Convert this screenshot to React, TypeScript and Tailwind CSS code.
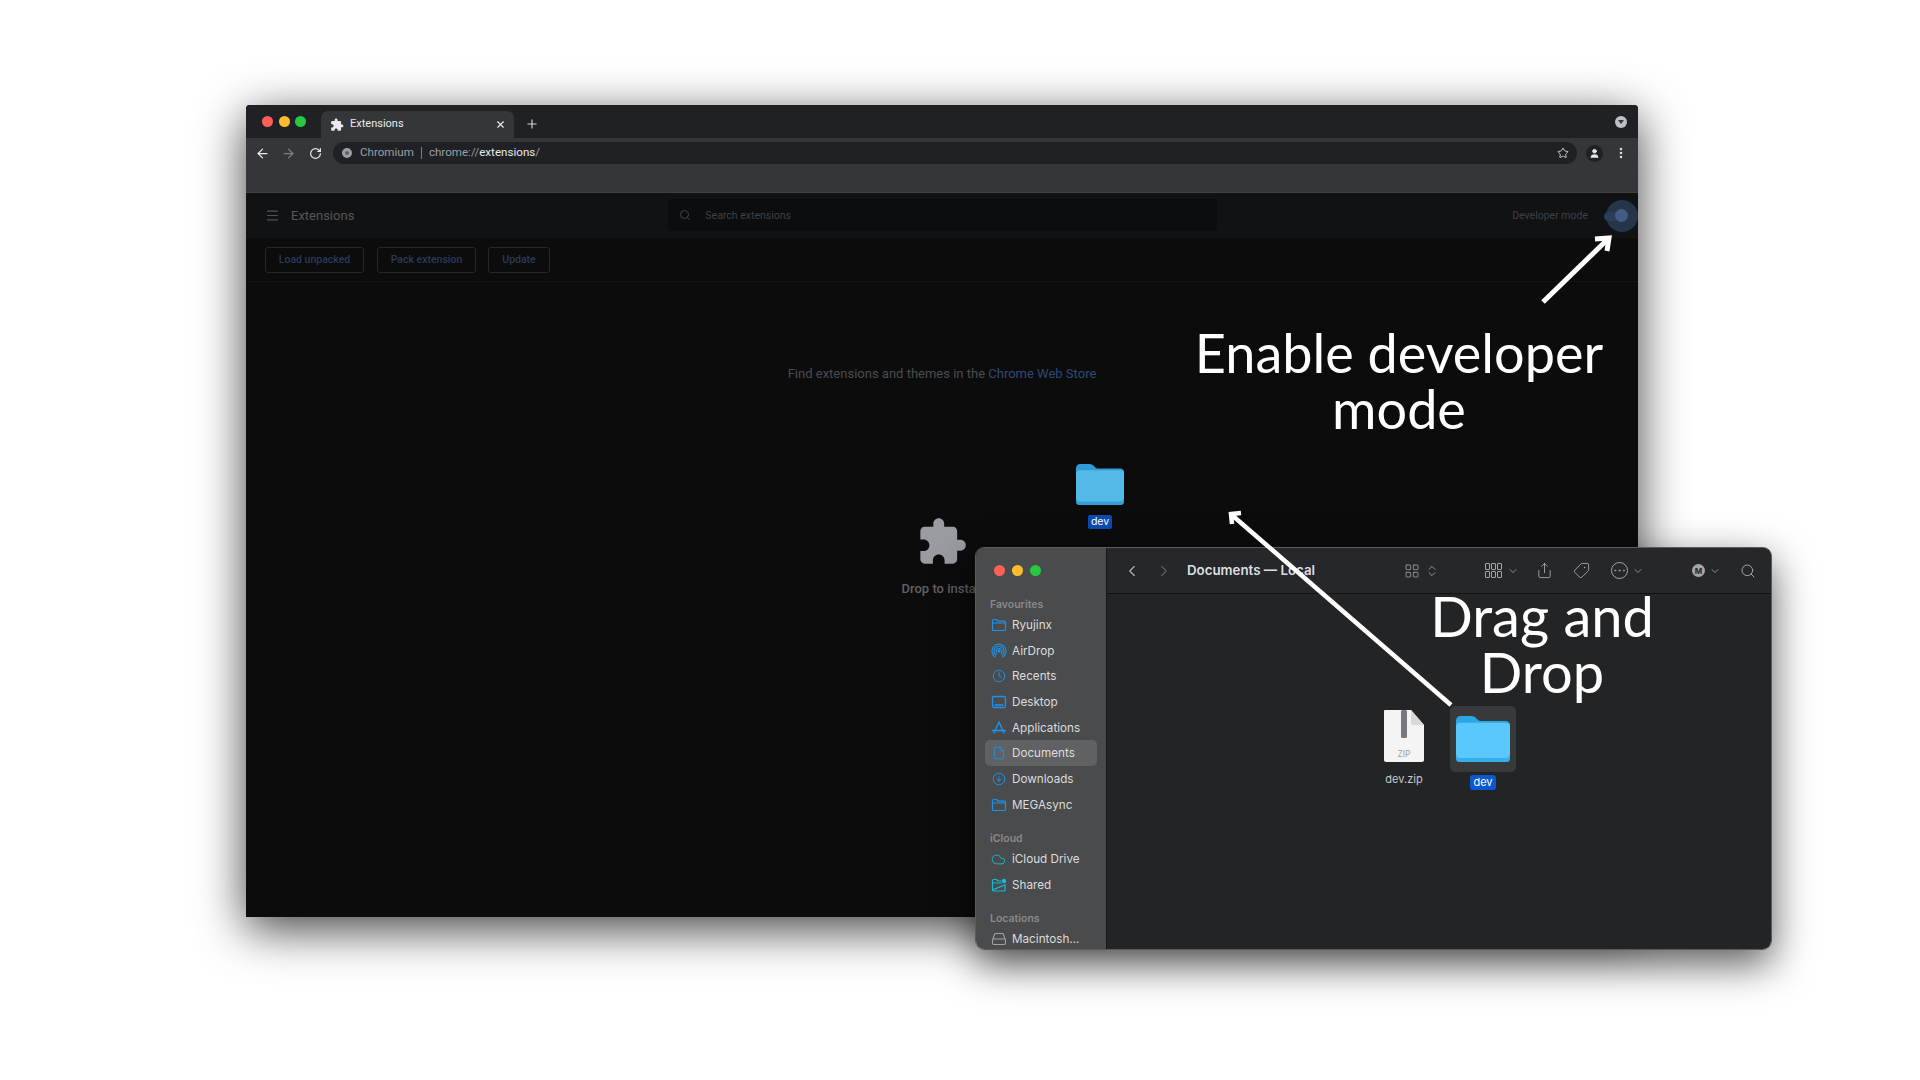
import { ArrowLeft, ArrowRight, ChevronDown, ChevronLeft, ChevronRight, ChevronsUpDown, CircleArrowDown, Clock, Cloud, Ellipsis, File, LayoutGrid, Menu, MoreVertical, Plus, RotateCw, Search, Share, Star, Tag, User, X } from "lucide-react";
import type { ReactNode } from "react";

const PUZZLE =
  "M20.5 11H19V7c0-1.1-.9-2-2-2h-4V3.5C13 2.12 11.88 1 10.5 1S8 2.12 8 3.5V5H4c-1.1 0-1.99.9-1.99 2v3.8H3.5c1.49 0 2.7 1.21 2.7 2.7s-1.21 2.7-2.7 2.7H2V20c0 1.1.9 2 2 2h3.8v-1.5c0-1.49 1.21-2.7 2.7-2.7 1.49 0 2.7 1.21 2.7 2.7V22H17c1.1 0 2-.9 2-2v-4h1.5c1.38 0 2.5-1.12 2.5-2.5S21.88 11 20.5 11z";

const Puzzle = ({ size, color }: { size: number; color: string }) => (
  <svg width={size} height={size} viewBox="0 0 24 24" fill={color}>
    <path d={PUZZLE} />
  </svg>
);

const Lights = ({ gap }: { gap: string }) => (
  <div className={`flex items-center ${gap}`}>
    <span className="w-[11px] h-[11px] rounded-full bg-[#fe5f57]" />
    <span className="w-[11px] h-[11px] rounded-full bg-[#febc2e]" />
    <span className="w-[11px] h-[11px] rounded-full bg-[#28c840]" />
  </div>
);

const FolderIcon = ({ w, h, back, front, lip }: { w: number; h: number; back: string; front: string; lip: string }) => (
  <svg width={w} height={h} viewBox="0 0 54 46">
    <path d="M0 5 C0 2 2 0 5 0 H15 C18 0 19 1 21 3 C22 4 23 5 25 5 H50 C52 5 54 7 54 9 V20 H0 Z" fill={back} />
    <rect x="0" y="6" width="54" height="40" rx="3.5" fill={lip} />
    <path d="M0 10 C0 8 2 7 4 7 H50 C52 7 54 8 54 10 V38 C54 40 52 42 50 42 H4 C2 42 0 40 0 38 Z" fill={front} />
  </svg>
);

/* sidebar glyphs, 16px box */
const SideFolder = ({ color }: { color: string }) => (
  <svg width="16" height="14" viewBox="0 0 16 14" fill="none" stroke={color} strokeWidth="1.2">
    <path d="M1.5 11.5V2.500c0-.6.4-1 1-1h3.200l1.300 1.600h6.500c.6 0 1 .4 1 1v7.400c0 .6-.4 1-1 1h-11c-.6 0-1-.4-1-1z" />
    <path d="M1.500 5h13" />
  </svg>
);

const AirDrop = () => (
  <svg width="16" height="16" viewBox="0 0 16 16" fill="none" stroke="#1c93ee" strokeWidth="1.1">
    <path d="M4.500 14.200A7 7 0 1 1 11.500 14.200" />
    <path d="M5.300 12.400A5 5 0 1 1 10.700 12.400" />
    <path d="M6 10.700A3 3 0 1 1 10 10.700" />
    <circle cx="8" cy="8" r="1" fill="#1c93ee" />
  </svg>
);

const Desktop = () => (
  <svg width="16" height="14" viewBox="0 0 16 14" fill="none" stroke="#1c93ee" strokeWidth="1.3">
    <rect x="1.500" y="1.500" width="13" height="11" rx="1.500" />
    <path d="M3.500 10h9" strokeWidth="1.700" />
  </svg>
);

const Apps = () => (
  <svg width="16" height="14" viewBox="0 0 16 14" fill="none" stroke="#1c93ee" strokeWidth="1.400" strokeLinecap="round">
    <path d="M8 1l-5 11M8 1l5 11M1.500 9.500h13" />
  </svg>
);

const Shared = () => (
  <svg width="16" height="14" viewBox="0 0 16 14" fill="none" stroke="#12bcd6" strokeWidth="1.200">
    <path d="M1.500 12V2.500c0-.6.4-1 1-1h3l1.300 1.500h3.700M14 7v5c0 .6-.4 1-1 1H2.500c-.6 0-1-.4-1-1z" />
    <path d="M1.500 5h9" />
    <circle cx="13" cy="3" r="2.200" fill="#12bcd6" stroke="none" />
  </svg>
);

const Drive = () => (
  <svg width="16" height="14" viewBox="0 0 16 14" fill="none" stroke="#a2a3a5" strokeWidth="1.100">
    <path d="M2 7l1.500-4.500c.2-.6.600-1 1.200-1h6.600c.6 0 1 .4 1.200 1L14 7" />
    <rect x="1.500" y="7" width="13" height="5.500" rx="1.500" />
  </svg>
);

const SideRow = ({ icon, label, active }: { icon: ReactNode; label: string; active?: boolean }) => (
  <div className={`h-[25.7px] mx-[9px] flex items-center rounded-[5px] ${active ? "bg-[#606163]" : ""}`}>
    <span className="w-[27px] flex justify-center">{icon}</span>
    <span className="text-[11.7px] leading-[14px] text-[#dcdcdd]">{label}</span>
  </div>
);

const SideTitle = ({ label, className }: { label: string; className: string }) => (
  <div className={`pl-[14px] h-[14px] text-[10.5px] leading-[14px] font-semibold text-[#88898b] ${className}`}>{label}</div>
);

const Chromium = () => (
  <div className="absolute left-[246px] top-[105px] w-[1392px] h-[812px] flex flex-col bg-[#0c0c0d] shadow-[0_12px_48px_rgba(0,0,0,0.75)] font-['Roboto',sans-serif] overflow-hidden rounded-t-[4px]">
    {/* tab strip */}
    <div className="h-[33px] shrink-0 bg-[#202124] flex items-end relative">
      <div className="absolute left-[16px] top-[11px]">
        <Lights gap="gap-[5.5px]" />
      </div>
      <div className="ml-[75px] w-[193px] h-[27px] bg-[#35363a] rounded-t-[7px] flex items-center pl-[9px] pr-[8px]">
        <Puzzle size={14} color="#e8eaed" />
        <span className="ml-[6px] text-[11px] text-[#e8eaed]">Extensions</span>
        <X size={11} strokeWidth={2.5} className="ml-auto text-[#e8eaed]" />
      </div>
      <Plus size={14} strokeWidth={2} className="ml-[11px] mb-[7px] text-[#d4d5d7]" />
      <div className="ml-auto mr-[11px] mb-[10px] w-[12px] h-[12px] rounded-full bg-[#bdc1c6] flex items-center justify-center">
        <span className="border-x-[3px] border-x-transparent border-t-[4px] border-t-[#35363a]" />
      </div>
    </div>
    {/* toolbar */}
    <div className="h-[55px] shrink-0 bg-[#35363a] border-b border-[#3e3f43]">
      <div className="flex items-center h-[28px] mt-[1px] pl-[9px] pr-[10px]">
        <ArrowLeft size={15} strokeWidth={2} className="text-[#e8eaed]" />
        <ArrowRight size={15} strokeWidth={2} className="ml-[11px] text-[#7d7e82]" />
        <RotateCw size={13} strokeWidth={2.2} className="ml-[13px] text-[#e8eaed]" />
        <div className="ml-[11px] flex-1 h-[22px] bg-[#202124] rounded-full flex items-center pl-[9px] pr-[8px] text-[11.6px]">
          <span className="w-[10px] h-[10px] rounded-full border-[3px] border-[#9aa0a6] bg-[#5f6368]" />
          <span className="ml-[8px] text-[#9aa0a6]">Chromium</span>
          <span className="ml-[7px] w-px h-[12px] bg-[#7d7e82]" />
          <span className="ml-[7px] text-[#9aa0a6]">chrome://</span>
          <span className="text-[#e8eaed]">extensions</span>
          <span className="text-[#9aa0a6]">/</span>
          <Star size={12} strokeWidth={1.8} className="ml-auto text-[#dadce0]" />
        </div>
        <div className="ml-[9px] w-[17px] h-[17px] rounded-full bg-[#202124] flex items-center justify-center">
          <User size={11} fill="#e8eaed" strokeWidth={2} className="text-[#e8eaed]" />
        </div>
        <MoreVertical size={14} strokeWidth={2.4} className="ml-[11px] text-[#dadce0]" />
      </div>
    </div>
    {/* extensions header */}
    <div className="h-[45px] shrink-0 bg-[#111214] flex items-center relative border-b border-[#151618]">
      <Menu size={15} strokeWidth={1.8} className="ml-[19px] text-[#4f5155]" />
      <span className="ml-[11px] text-[13px] leading-[17px] mt-[1px] text-[#55575b]">Extensions</span>
      <div className="ml-[314px] w-[549px] h-[32px] bg-[#0c0d0e] rounded-[3px] flex items-center pl-[11px]">
        <Search size={12} strokeWidth={2} className="text-[#44464a]" />
        <span className="ml-[14px] text-[10.5px] leading-[14px] mt-[1px] text-[#3f4144]">Search extensions</span>
      </div>
      <span className="ml-auto mr-[50px] text-[10.5px] leading-[14px] mt-[1px] text-[#3f4144]">Developer mode</span>
      {/* toggle, half its ripple is cut by the window edge */}
      <div className="absolute right-0 top-[7px] w-[32px] h-[32px] rounded-full bg-[#26354a]" />
      <div className="absolute right-[12px] top-[19px] w-[22px] h-[9px] rounded-full bg-[#2b3d5a]" />
      <div className="absolute right-[10px] top-[16px] w-[13px] h-[13px] rounded-full bg-[#435c85]" />
    </div>
    {/* dev buttons */}
    <div className="h-[44px] shrink-0 flex items-center gap-[13px] pl-[19px] border-b border-[#131415]">
      <button className="h-[26px] w-[99px] rounded-[3px] border border-[#26272a] text-[10.5px] font-medium text-[#2b3a5a]">Load unpacked</button>
      <button className="h-[26px] w-[99px] rounded-[3px] border border-[#26272a] text-[10.5px] font-medium text-[#2b3a5a]">Pack extension</button>
      <button className="h-[26px] w-[62px] -ml-[1px] rounded-[3px] border border-[#26272a] text-[10.5px] font-medium text-[#2b3a5a]">Update</button>
    </div>
    {/* drop area */}
    <div className="flex-1 flex flex-col items-center relative pt-[82px] text-[13px] text-[#4a4c50]">
      <p>
        Find extensions and themes in the <span className="text-[#2f4a75]">Chrome Web Store</span>
      </p>
      <div className="mt-[132px]">
        <Puzzle size={52} color="#9a9ca1" />
      </div>
      <span className="mt-[11px] font-medium text-[#5f6165]">Drop to install</span>
    </div>
  </div>
);

const Finder = () => (
  <div className="absolute left-[975px] top-[547px] w-[797px] h-[403px] flex rounded-[9px] border border-[#5a5b5d] overflow-hidden shadow-[0_14px_40px_rgba(0,0,0,0.65)] font-['Inter',sans-serif]">
    <div className="w-[131px] shrink-0 bg-[#4a4b4d] border-r border-[#161718] overflow-hidden">
      <div className="pl-[18px] pt-[17px]">
        <Lights gap="gap-[7px]" />
      </div>
      <SideTitle label="Favourites" className="mt-[22px]" />
      <SideRow icon={<SideFolder color="#1c93ee" />} label="Ryujinx" />
      <SideRow icon={<AirDrop />} label="AirDrop" />
      <SideRow icon={<Clock size={14} strokeWidth={1.6} className="text-[#1c93ee]" />} label="Recents" />
      <SideRow icon={<Desktop />} label="Desktop" />
      <SideRow icon={<Apps />} label="Applications" />
      <SideRow icon={<File size={14} strokeWidth={1.6} className="text-[#1c93ee]" />} label="Documents" active />
      <SideRow icon={<CircleArrowDown size={14} strokeWidth={1.6} className="text-[#1c93ee]" />} label="Downloads" />
      <SideRow icon={<SideFolder color="#1c93ee" />} label="MEGAsync" />
      <SideTitle label="iCloud" className="mt-[14px] mb-[1px]" />
      <SideRow icon={<Cloud size={15} strokeWidth={1.4} className="text-[#12bcd6]" />} label="iCloud Drive" />
      <SideRow icon={<Shared />} label="Shared" />
      <SideTitle label="Locations" className="mt-[14px]" />
      <SideRow icon={<Drive />} label="Macintosh..." />
    </div>
    <div className="flex-1 flex flex-col bg-[#232426]">
      <div className="h-[46px] shrink-0 flex items-center border-b border-[#111213] text-[#a5a6a8] bg-[#25272a]">
        <ChevronLeft size={18} strokeWidth={1.5} className="ml-[16px] text-[#b5b6b8]" />
        <ChevronRight size={18} strokeWidth={1.5} className="ml-[14px] text-[#5e5f62]" />
        <span className="ml-[14px] text-[13.3px] font-semibold text-[#dedee0]">Documents — Local</span>
        <LayoutGrid size={16} strokeWidth={1.2} className="ml-[89px]" />
        <ChevronsUpDown size={14} strokeWidth={1.5} className="ml-[5px]" />
        <div className="ml-[46px] w-[17px] h-[15px] grid grid-cols-3 gap-[1px]">
          <span className="border border-[#a5a6a8] rounded-[1px]" />
          <span className="border border-[#a5a6a8] rounded-[1px]" />
          <span className="border border-[#a5a6a8] rounded-[1px]" />
          <span className="border border-[#a5a6a8] rounded-[1px]" />
          <span className="border border-[#a5a6a8] rounded-[1px]" />
          <span className="border border-[#a5a6a8] rounded-[1px]" />
        </div>
        <ChevronDown size={12} strokeWidth={1.6} className="ml-[5px]" />
        <Share size={17} strokeWidth={1.3} className="ml-[17px]" />
        <Tag size={17} strokeWidth={1.3} className="ml-[20px] rotate-90" />
        <Ellipsis size={17} strokeWidth={1.3} className="ml-[21px] rounded-full border border-[#a5a6a8]" />
        <ChevronDown size={12} strokeWidth={1.6} className="ml-[4px]" />
        <span className="ml-[48px] w-[13px] h-[13px] rounded-full bg-[#a5a6a8] flex items-center justify-center text-[8px] font-bold text-[#232426]">M</span>
        <ChevronDown size={12} strokeWidth={1.6} className="ml-[4px]" />
        <Search size={16} strokeWidth={1.5} className="ml-[19px]" />
      </div>
      <div className="flex-1 flex items-start pt-[116px] pl-[277px] gap-[26px]">
        <div className="flex flex-col items-center w-[40px]">
          <svg width="40" height="52" viewBox="0 0 40 52">
            <path d="M1 0 H27 L40 15 V50 C40 51 39 52 38 52 H2 C1 52 0 51 0 50 V1 C0 .5 .5 0 1 0 Z" fill="#f4f4f4" />
            <path d="M27 0 L40 15 H29 C28 15 27 14 27 13 Z" fill="#d8d8d8" />
            <rect x="17" y="0" width="6" height="28" rx="1.5" fill="#77797c" />
            <text x="20" y="47" fontSize="8.5" textAnchor="middle" fill="#a0a0a0" fontFamily="Inter, sans-serif">ZIP</text>
          </svg>
          <span className="mt-[9px] text-[11px] text-[#c9c9ca] whitespace-nowrap">dev.zip</span>
        </div>
        <div className="flex flex-col items-center -mt-[4px]">
          <div className="w-[66px] h-[66px] bg-[#38393b] rounded-[5px] flex items-center justify-center">
            <FolderIcon w={54} h={46} back="#2aa6e4" front="#5ac8fd" lip="#35aef0" />
          </div>
          <span className="mt-[3px] px-[3px] rounded-[3px] bg-[#0a58d0] text-[11px] leading-[15px] text-white">dev</span>
        </div>
      </div>
    </div>
  </div>
);

export default function App() {
  return (
    <div className="relative w-[1920px] h-[1080px] bg-white overflow-hidden">
      <Chromium />
      {/* the folder being dragged, floats over the page */}
      <div className="absolute left-[1076px] top-[464px] flex flex-col items-center font-['Inter',sans-serif]">
        <FolderIcon w={48} h={41} back="#2f9bd8" front="#54b9e6" lip="#339fd8" />
        <span className="mt-[10px] px-[3px] rounded-[2px] bg-[#0a4db0] text-[10.5px] leading-[14px] text-white">dev</span>
      </div>
      <Finder />
      {/* arrows */}
      <svg className="absolute inset-0" width="1920" height="1080" fill="none" stroke="white">
        <path d="M1543 302 L1608 239" strokeWidth="5" />
        <path d="M1595 239 L1609 238 L1607 251" strokeWidth="5" />
        <path d="M1451 705 L1233 516" strokeWidth="4.5" />
        <path d="M1232 524 L1231 514 L1241 513" strokeWidth="4.5" />
      </svg>
      {/* captions */}
      <div className="absolute left-[1149px] top-[325px] w-[500px] text-center text-[54px] leading-[56px] text-white font-['Lato',sans-serif]">
        Enable developer
        <br />
        mode
      </div>
      <div className="absolute left-[1392px] top-[588px] w-[300px] text-center text-[56px] leading-[56px] text-white font-['Lato',sans-serif]">
        Drag and
        <br />
        Drop
      </div>
    </div>
  );
}
